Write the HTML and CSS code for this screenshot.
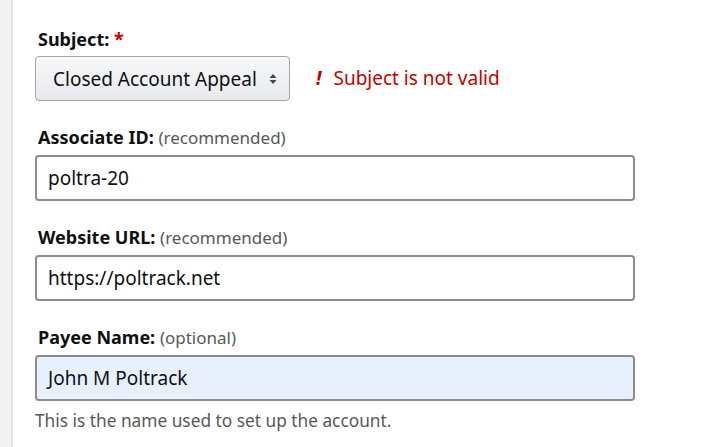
FILE: index.html
```html
<!DOCTYPE html>
<html>
<head>
<meta charset="utf-8">
<link rel="stylesheet" href="styles.css">
</head>
<body>
<div class="page">
  <div class="rail"></div>
  <form class="form">
    <div class="field">
      <div class="label"><b>Subject:</b> <span class="req">*</span></div>
      <div class="row">
        <div class="select">Closed Account Appeal
          <svg class="caret" width="8" height="12" viewBox="0 0 8 12"><path d="M4 1 L7.5 5 H0.5 Z M4 11 L7.5 7 H0.5 Z" fill="#444"/></svg>
        </div>
        <div class="error"><span class="bang">!</span>Subject is not valid</div>
      </div>
    </div>
    <div class="field">
      <div class="label"><b>Associate ID:</b> <span class="hint">(recommended)</span></div>
      <div class="input">poltra-20</div>
    </div>
    <div class="field">
      <div class="label"><b>Website URL:</b> <span class="hint">(recommended)</span></div>
      <div class="input">https://poltrack.net</div>
    </div>
    <div class="field">
      <div class="label"><b>Payee Name:</b> <span class="hint">(optional)</span></div>
      <div class="input autofill">John M Poltrack</div>
      <div class="help">This is the name used to set up the account.</div>
    </div>
  </form>
</div>
</body>
</html>
```
FILE: styles.css
```css
html, body { margin: 0; padding: 0; background: #fff; }
body { font-family: "Noto Sans", "Open Sans", sans-serif; color: #0f1111; }
.page { display: flex; min-height: 447px; }
.rail { width: 11px; background: #f3f3f3; border-right: 2px solid #e3e3e3; }
.form { padding: 27px 0 0 22px; display: flex; flex-direction: column; gap: 24px; }
.field { display: flex; flex-direction: column; }
.label { font-size: 18px; line-height: 24px; height: 24px; padding-left: 3px; margin-bottom: 5px; }
.label b { font-weight: 700; }
.req { color: #c40000; font-weight: 700; }
.hint { color: #565959; font-size: 17px; line-height: 24px; }
.row { display: flex; align-items: center; gap: 26px; }
.select { width: 255px; height: 45px; box-sizing: border-box; border: 1px solid #a2a6ac; border-radius: 4px; background: linear-gradient(#f7f8fa, #e7e9ec); box-shadow: 0 1px 0 rgba(255,255,255,.6) inset; display: flex; align-items: center; padding: 0 12px 0 17px; justify-content: space-between; font-size: 19px; }
.caret { display: block; }
.error { color: #c40000; font-size: 19px; display: flex; align-items: center; margin-top: -2px; }
.bang { font-weight: 700; font-style: italic; margin-right: 12px; font-size: 19px; }
.field + .field .label { margin-bottom: 6px; }
.input { width: 600px; height: 46px; box-sizing: border-box; border: 2px solid #8c8c8c; border-radius: 4px; display: flex; align-items: center; padding-left: 11px; font-size: 19px; }
.autofill { background: #e8f0fe; }
.help { color: #565959; font-size: 17.3px; margin-top: 8px; line-height: 24px; }
```
